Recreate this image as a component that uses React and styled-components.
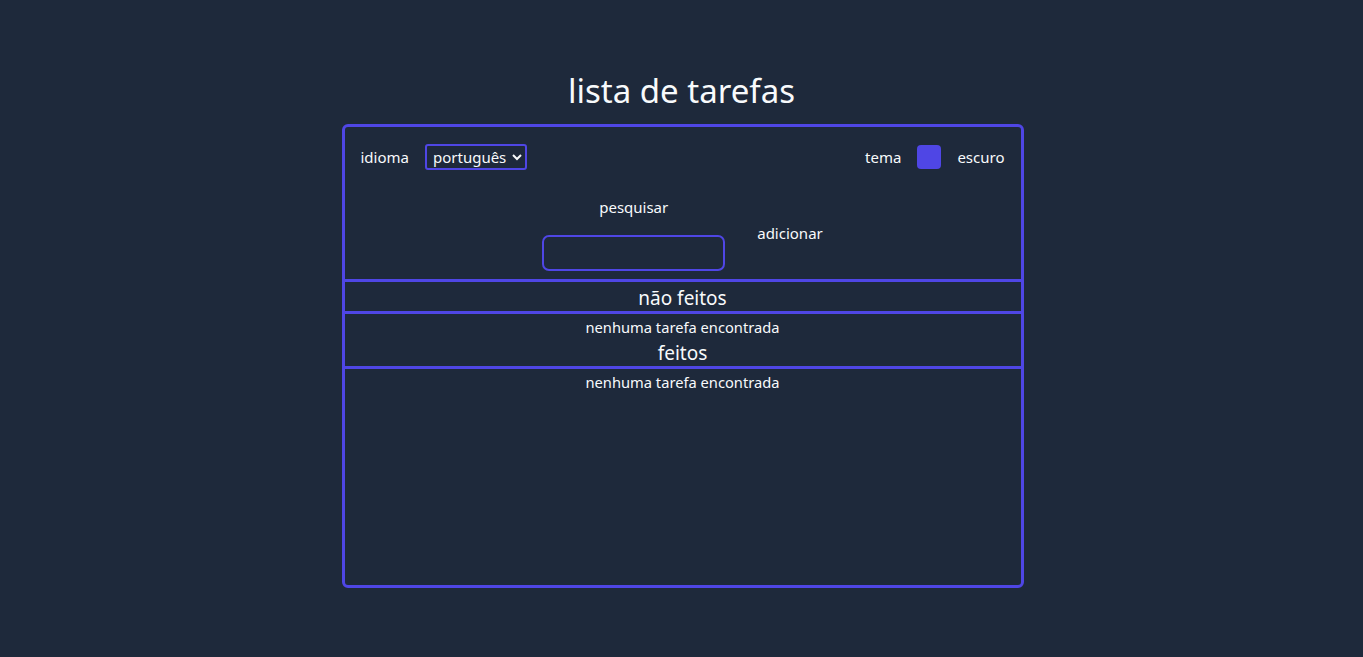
import styled, { createGlobalStyle } from 'styled-components'

const GlobalStyle = createGlobalStyle`
    html, body {
        margin: 0;
        padding: 0;
        background-color: #1e293b;
        color: #f8fafc;
        font-family: 'Noto Sans', 'Open Sans', sans-serif;
    }
`;

export default function App() {
    return (
        <>
            <GlobalStyle />
            <Page>
                <Title>lista de tarefas</Title>
                <Card>
                    <Top>
                        <Settings>
                            <Field>
                                <Label>idioma</Label>
                                <Select defaultValue="pt">
                                    <option value="pt">português</option>
                                    <option value="en">english</option>
                                </Select>
                            </Field>
                            <Field>
                                <Label>tema</Label>
                                <ThemeBox />
                                <Label>escuro</Label>
                            </Field>
                        </Settings>
                        <AddRow>
                            <SearchField>
                                <Label>pesquisar</Label>
                                <SearchInput type="text" />
                            </SearchField>
                            <AddButton>adicionar</AddButton>
                        </AddRow>
                    </Top>
                    <SectionTitle>não feitos</SectionTitle>
                    <Empty>nenhuma tarefa encontrada</Empty>
                    <SectionTitle>feitos</SectionTitle>
                    <Empty>nenhuma tarefa encontrada</Empty>
                </Card>
            </Page>
        </>
    )
}

const Page = styled.div`
    display: flex;
    flex-direction: column;
    align-items: center;
    padding-top: 66px;
`;
const Title = styled.h1`
    margin: 0 0 8px;
    font-size: 33px;
    font-weight: 400;
    line-height: 50px;
`;
const Card = styled.div`
    width: 676px;
    height: 458px;
    margin-left: 2px;
    border: 3px solid #4f46e5;
    border-radius: 6px;
    display: flex;
    flex-direction: column;
`;
const Top = styled.div`
    padding: 17px 16px 8px 16px;
    border-bottom: 3px solid #4f46e5;
`;
const Settings = styled.div`
    display: flex;
    justify-content: space-between;
    align-items: center;
`;
const Field = styled.div`
    display: flex;
    align-items: center;
    gap: 16px;
`;
const Label = styled.span`
    font-size: 15px;
`;
const Select = styled.select`
    background: #1e293b;
    color: #f8fafc;
    border: 2px solid #4f46e5;
    border-radius: 3px;
    font-family: inherit;
    font-size: 15px;
    height: 26px;
    padding: 0 2px;
`;
const ThemeBox = styled.div`
    width: 24px;
    height: 24px;
    border-radius: 4px;
    background-color: #4f46e5;
`;
const AddRow = styled.div`
    display: flex;
    justify-content: center;
    align-items: flex-start;
    gap: 32px;
    margin-top: 27px;
`;
const SearchField = styled.div`
    display: flex;
    flex-direction: column;
    align-items: center;
    gap: 18px;
`;
const SearchInput = styled.input`
    box-sizing: border-box;
    width: 183px;
    height: 36px;
    background: transparent;
    border: 2px solid #4f46e5;
    border-radius: 7px;
    color: #f8fafc;
    outline: none;
`;
const AddButton = styled.button`
    background: none;
    border: none;
    color: #f8fafc;
    font-family: inherit;
    font-size: 15px;
    padding: 0;
    margin-top: 26px;
`;
const SectionTitle = styled.h2`
    margin: 0;
    padding-top: 3px;
    font-size: 19px;
    font-weight: 400;
    text-align: center;
    line-height: 26px;
    border-bottom: 3px solid #4f46e5;
`;
const Empty = styled.p`
    margin: 0;
    padding-top: 3px;
    font-size: 14.7px;
    text-align: center;
    line-height: 20px;
`;
